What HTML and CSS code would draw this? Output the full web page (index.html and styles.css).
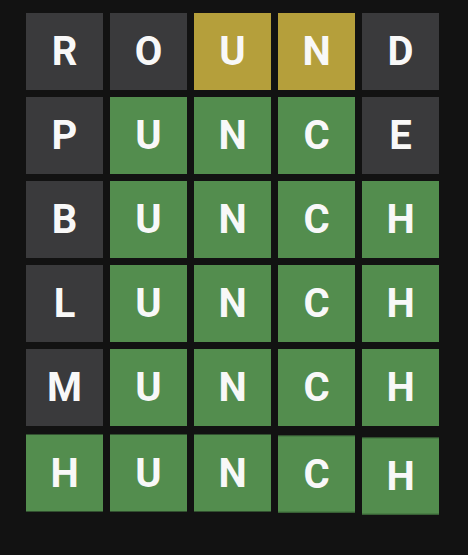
FILE: index.html
```html
<!DOCTYPE html>
<html>
<head>
<meta charset="utf-8">
<link rel="stylesheet" href="styles.css">
</head>
<body>
<div class="board">
  <div class="row">
    <div class="tile absent">R</div>
    <div class="tile absent">O</div>
    <div class="tile present">U</div>
    <div class="tile present">N</div>
    <div class="tile absent">D</div>
  </div>
  <div class="row">
    <div class="tile absent">P</div>
    <div class="tile correct">U</div>
    <div class="tile correct">N</div>
    <div class="tile correct">C</div>
    <div class="tile absent">E</div>
  </div>
  <div class="row">
    <div class="tile absent">B</div>
    <div class="tile correct">U</div>
    <div class="tile correct">N</div>
    <div class="tile correct">C</div>
    <div class="tile correct">H</div>
  </div>
  <div class="row">
    <div class="tile absent">L</div>
    <div class="tile correct">U</div>
    <div class="tile correct">N</div>
    <div class="tile correct">C</div>
    <div class="tile correct">H</div>
  </div>
  <div class="row">
    <div class="tile absent">M</div>
    <div class="tile correct">U</div>
    <div class="tile correct">N</div>
    <div class="tile correct">C</div>
    <div class="tile correct">H</div>
  </div>
  <div class="row last">
    <div class="tile correct b1">H</div>
    <div class="tile correct b2">U</div>
    <div class="tile correct b3">N</div>
    <div class="tile correct b4">C</div>
    <div class="tile correct b5">H</div>
  </div>
</div>
</body>
</html>
```

FILE: styles.css
```css
html, body {
  margin: 0;
  padding: 0;
  background: #121212;
}

body {
  width: 468px;
  height: 555px;
  overflow: hidden;
  font-family: Roboto, "Liberation Sans", sans-serif;
}

.board {
  display: flex;
  flex-direction: column;
  gap: 7px;
  padding: 13px 0 0 26px;
}

.row {
  display: flex;
  gap: 7px;
}

.tile {
  width: 77px;
  height: 77px;
  display: flex;
  align-items: center;
  justify-content: center;
  color: #f8f8f8;
  font-size: 40px;
  font-weight: 700;
  line-height: 1;
}

.absent { background: #3a3a3c; }
.present { background: #b59f3b; }
.correct { background: #538d4e; }

.last .b1, .last .b2, .last .b3 { transform: translateY(1.5px); }
.last .b4 { transform: translateY(2.5px); box-shadow: inset 0 1px 0 #3f6e3b, inset 0 -1px 0 #3f6e3b; }
.last .b5 { transform: translateY(4.5px); box-shadow: inset 0 1px 0 #3f6e3b, inset 0 -1px 0 #3f6e3b; }
```
